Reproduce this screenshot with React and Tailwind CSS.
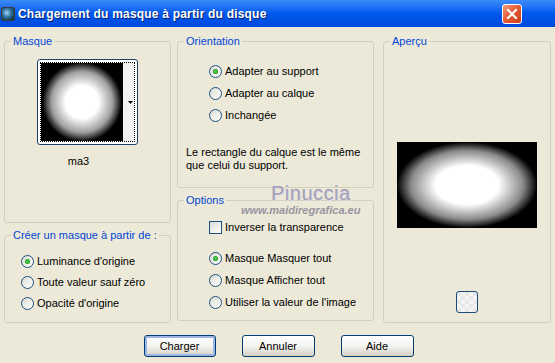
import React from "react";

const font = { fontFamily: '"Liberation Sans", Arial, sans-serif' };

function Radio({ checked, label }) {
  return (
    <div className="flex items-center h-[13px]">
      <span className="relative w-[13px] h-[13px] rounded-full border border-[#1c5180] bg-gradient-to-br from-[#dcdcd5] to-[#ffffff] flex items-center justify-center shrink-0">
        {checked && (
          <span className="w-[5px] h-[5px] rounded-full bg-[radial-gradient(circle,#5fe05f_0%,#21a121_60%,#1a8a1a_100%)]" />
        )}
      </span>
      <span className="ml-[3px] text-[11px] text-black leading-[13px] whitespace-nowrap">{label}</span>
    </div>
  );
}

function Group({ label, className, children }) {
  return (
    <div className={"relative border border-[#d0d0bf] rounded-[3px] " + className}>
      <span className="absolute -top-[7px] left-[6px] bg-[#ece9d8] px-[2px] text-[11px] leading-[13px] text-[#0046d5]">
        {label}
      </span>
      {children}
    </div>
  );
}

function XpButton({ label, def }) {
  return (
    <button
      className={
        "h-[22px] rounded-[3px] border border-[#003c74] bg-gradient-to-b from-[#ffffff] via-[#f4f4f0] to-[#d6d0c5] text-[11px] text-black " +
        (def ? "w-[72px] shadow-[inset_0_0_0_2px_#9cb6e8]" : "w-[73px]")
      }
    >
      {label}
    </button>
  );
}

export default function App() {
  return (
    <div className="w-[555px] h-[363px] bg-[#ece9d8] overflow-hidden relative" style={font}>
      {/* title bar */}
      <div className="h-[27px] bg-gradient-to-b from-[#3c8cf8] via-[#0058ee] to-[#0049dc] flex items-center">
        <span className="ml-[1px] w-[14px] h-[14px] rounded-[2px] bg-[radial-gradient(circle_at_40%_40%,#9fd3ff_0%,#2a6f9a_45%,#14202a_100%)] border border-[#3a3a3a]" />
        <span className="ml-[3px] text-white font-bold text-[12px] tracking-[0.2px] [text-shadow:1px_1px_0_#0a246a]">
          Chargement du masque à partir du disque
        </span>
        <span className="ml-auto mr-[33px] w-[20px] h-[20px] rounded-[3px] border border-white bg-gradient-to-br from-[#f29a7a] via-[#e2582f] to-[#c8401a] flex items-center justify-center">
          <svg width="12" height="12" viewBox="0 0 12 12">
            <path d="M2 2 L10 10 M10 2 L2 10" stroke="white" strokeWidth="2.2" strokeLinecap="square" />
          </svg>
        </span>
      </div>

      {/* body */}
      <div className="flex pl-[4px] pt-[14px]">
        {/* left column */}
        <div className="flex flex-col gap-[12px] w-[167px]">
          <Group label="Masque" className="h-[182px]">
            <div className="flex flex-col items-center pt-[17px]">
              <div className="w-[101px] h-[86px] rounded-[3px] border border-[#1c3f6e] bg-white p-[2px]">
                <div className="w-full h-full border border-dotted border-black flex">
                  <div className="w-[82px] h-full bg-[radial-gradient(circle_closest-side,#ffffff_0%,#ffffff_42%,#a0a0a0_78%,#000000_102%)] bg-black" />
                  <div className="flex-1 bg-[#f2f2f2] flex items-center justify-end pr-[1px]">
                    <svg width="5" height="3" viewBox="0 0 5 3">
                      <path d="M0 0 H5 L2.5 3 Z" fill="black" />
                    </svg>
                  </div>
                </div>
              </div>
              <div className="mt-[10px] pr-[18px] text-[11px] leading-[13px] text-black">ma3</div>
            </div>
          </Group>
          <Group label="Créer un masque à partir de :" className="h-[88px]">
            <div className="flex flex-col gap-[8px] pl-[16px] pt-[19px]">
              <Radio checked label="Luminance d'origine" />
              <Radio label="Toute valeur sauf zéro" />
              <Radio label="Opacité d'origine" />
            </div>
          </Group>
        </div>

        {/* middle column */}
        <div className="flex flex-col gap-[12px] w-[197px] ml-[6px]">
          <Group label="Orientation" className="h-[147px]">
            <div className="flex flex-col gap-[9px] pl-[31px] pt-[23px]">
              <Radio checked label="Adapter au support" />
              <Radio label="Adapter au calque" />
              <Radio label="Inchangée" />
            </div>
            <p className="pl-[8px] pt-[24px] text-[11px] leading-[13px] text-black">
              Le rectangle du calque est le même
              <br />
              que celui du support.
            </p>
          </Group>
          <Group label="Options" className="h-[121px]">
            <div className="pl-[31px] pt-[20px]">
              <div className="flex items-center h-[13px]">
                <span className="w-[13px] h-[13px] border border-[#1c5180] bg-gradient-to-br from-[#dcdcd5] to-white shrink-0" />
                <span className="ml-[3px] text-[11px] leading-[13px] text-black">Inverser la transparence</span>
              </div>
              <div className="flex flex-col gap-[9px] mt-[18px]">
                <Radio checked label="Masque Masquer tout" />
                <Radio label="Masque Afficher tout" />
                <Radio label="Utiliser la valeur de l'image" />
              </div>
            </div>
          </Group>
        </div>

        {/* right column */}
        <Group label="Aperçu" className="w-[168px] h-[282px] ml-[9px]">
          <div className="flex flex-col items-center pt-[100px]">
            <div className="w-[140px] h-[86px] bg-black bg-[radial-gradient(ellipse_closest-side,#ffffff_0%,#ffffff_45%,#8a8a8a_80%,#000000_100%)]" />
            <div className="mt-[63px] w-[22px] h-[22px] rounded-[3px] border border-[#1c4a7a] bg-[conic-gradient(#f4f4f4_25%,#e8e8e8_0_50%,#f4f4f4_0_75%,#e8e8e8_0)] bg-[length:8px_8px]" />
          </div>
        </Group>
      </div>

      {/* buttons */}
      <div className="flex justify-center gap-[26px] mt-[12px] pl-[2px]">
        <XpButton label="Charger" def />
        <XpButton label="Annuler" />
        <XpButton label="Aide" />
      </div>

      {/* watermark overlay */}
      <div className="absolute left-[271px] top-[183px] text-[20px] leading-[20px] tracking-[0.5px] text-[#a29fb8] [text-shadow:1px_1px_0_#d8d6e2]">
        Pinuccia
      </div>
      <div className="absolute left-[241px] top-[204px] text-[11px] leading-[12px] italic font-bold text-[#8f8d9c] opacity-90">
        www.maidiregrafica.eu
      </div>
    </div>
  );
}
